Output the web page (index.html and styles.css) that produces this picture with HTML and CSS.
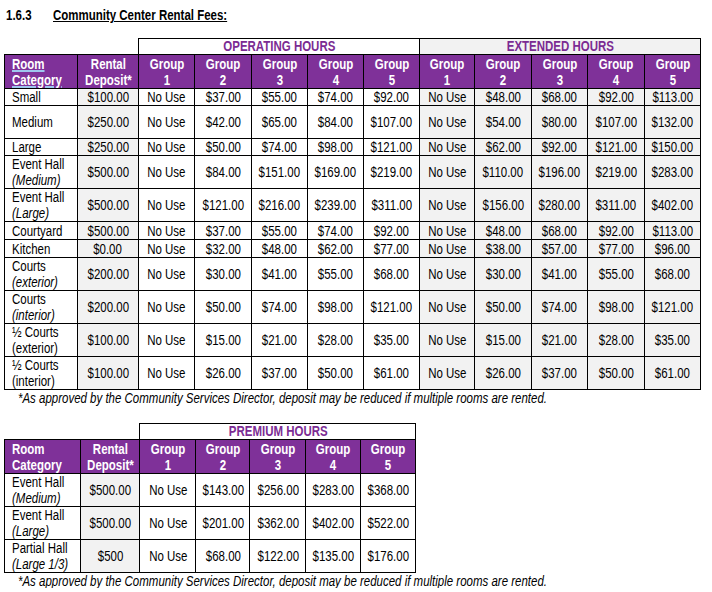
FILE: index.html
```html
<!DOCTYPE html>
<html>
<head>
<meta charset="utf-8">
<link rel="stylesheet" href="styles.css">
</head>
<body>
<div class="page">
  <h1 class="heading"><span class="num"><span class="n">1.6.3</span></span><span class="title"><span class="n">Community Center Rental Fees:</span></span></h1>

  <table class="fees t1">
    <colgroup>
      <col style="width:73px"><col style="width:61px">
      <col style="width:56px"><col style="width:57px"><col style="width:56px"><col style="width:56px"><col style="width:56px">
      <col style="width:55px"><col style="width:57px"><col style="width:56px"><col style="width:57px"><col style="width:56px">
    </colgroup>
    <tr class="cap">
      <td class="blank" colspan="2"></td>
      <td class="captitle" colspan="5"><span class="n">OPERATING HOURS</span></td>
      <td class="captitle ext" colspan="5"><span class="n">EXTENDED HOURS</span></td>
    </tr>
    <tr class="head">
      <th class="room"><span class="n"><span class="ul">Room </span><br><span class="ul">Category</span></span></th>
      <th><span class="n">Rental<br>Deposit*</span></th>
      <th><span class="n">Group<br>1</span></th><th><span class="n">Group<br>2</span></th><th><span class="n">Group<br>3</span></th><th><span class="n">Group<br>4</span></th><th><span class="n">Group<br>5</span></th>
      <th><span class="n">Group<br>1</span></th><th><span class="n">Group<br>2</span></th><th><span class="n">Group<br>3</span></th><th><span class="n">Group<br>4</span></th><th><span class="n">Group<br>5</span></th>
    </tr>
    <tr class="r1"><td class="room"><span class="n">Small</span></td><td class="dep"><span class="n">$100.00</span></td><td><span class="n">No Use</span></td><td><span class="n">$37.00</span></td><td><span class="n">$55.00</span></td><td><span class="n">$74.00</span></td><td><span class="n">$92.00</span></td><td class="g"><span class="n">No Use</span></td><td class="g"><span class="n">$48.00</span></td><td class="g"><span class="n">$68.00</span></td><td class="g"><span class="n">$92.00</span></td><td class="g"><span class="n">$113.00</span></td></tr>
    <tr class="r2"><td class="room"><span class="n">Medium</span></td><td class="dep"><span class="n">$250.00</span></td><td><span class="n">No Use</span></td><td><span class="n">$42.00</span></td><td><span class="n">$65.00</span></td><td><span class="n">$84.00</span></td><td><span class="n">$107.00</span></td><td class="g"><span class="n">No Use</span></td><td class="g"><span class="n">$54.00</span></td><td class="g"><span class="n">$80.00</span></td><td class="g"><span class="n">$107.00</span></td><td class="g"><span class="n">$132.00</span></td></tr>
    <tr class="r1"><td class="room"><span class="n">Large</span></td><td class="dep"><span class="n">$250.00</span></td><td><span class="n">No Use</span></td><td><span class="n">$50.00</span></td><td><span class="n">$74.00</span></td><td><span class="n">$98.00</span></td><td><span class="n">$121.00</span></td><td class="g"><span class="n">No Use</span></td><td class="g"><span class="n">$62.00</span></td><td class="g"><span class="n">$92.00</span></td><td class="g"><span class="n">$121.00</span></td><td class="g"><span class="n">$150.00</span></td></tr>
    <tr class="r2"><td class="room"><span class="n">Event Hall<br><i>(Medium)</i></span></td><td class="dep"><span class="n">$500.00</span></td><td><span class="n">No Use</span></td><td><span class="n">$84.00</span></td><td><span class="n">$151.00</span></td><td><span class="n">$169.00</span></td><td><span class="n">$219.00</span></td><td class="g"><span class="n">No Use</span></td><td class="g"><span class="n">$110.00</span></td><td class="g"><span class="n">$196.00</span></td><td class="g"><span class="n">$219.00</span></td><td class="g"><span class="n">$283.00</span></td></tr>
    <tr class="r2"><td class="room"><span class="n">Event Hall<br><i>(Large)</i></span></td><td class="dep"><span class="n">$500.00</span></td><td><span class="n">No Use</span></td><td><span class="n">$121.00</span></td><td><span class="n">$216.00</span></td><td><span class="n">$239.00</span></td><td><span class="n">$311.00</span></td><td class="g"><span class="n">No Use</span></td><td class="g"><span class="n">$156.00</span></td><td class="g"><span class="n">$280.00</span></td><td class="g"><span class="n">$311.00</span></td><td class="g"><span class="n">$402.00</span></td></tr>
    <tr class="r1b"><td class="room"><span class="n">Courtyard</span></td><td class="dep"><span class="n">$500.00</span></td><td><span class="n">No Use</span></td><td><span class="n">$37.00</span></td><td><span class="n">$55.00</span></td><td><span class="n">$74.00</span></td><td><span class="n">$92.00</span></td><td class="g"><span class="n">No Use</span></td><td class="g"><span class="n">$48.00</span></td><td class="g"><span class="n">$68.00</span></td><td class="g"><span class="n">$92.00</span></td><td class="g"><span class="n">$113.00</span></td></tr>
    <tr class="r1b"><td class="room"><span class="n">Kitchen</span></td><td class="dep"><span class="n">$0.00</span></td><td><span class="n">No Use</span></td><td><span class="n">$32.00</span></td><td><span class="n">$48.00</span></td><td><span class="n">$62.00</span></td><td><span class="n">$77.00</span></td><td class="g"><span class="n">No Use</span></td><td class="g"><span class="n">$38.00</span></td><td class="g"><span class="n">$57.00</span></td><td class="g"><span class="n">$77.00</span></td><td class="g"><span class="n">$96.00</span></td></tr>
    <tr class="r2"><td class="room"><span class="n">Courts<br><i>(exterior)</i></span></td><td class="dep"><span class="n">$200.00</span></td><td><span class="n">No Use</span></td><td><span class="n">$30.00</span></td><td><span class="n">$41.00</span></td><td><span class="n">$55.00</span></td><td><span class="n">$68.00</span></td><td class="g"><span class="n">No Use</span></td><td class="g"><span class="n">$30.00</span></td><td class="g"><span class="n">$41.00</span></td><td class="g"><span class="n">$55.00</span></td><td class="g"><span class="n">$68.00</span></td></tr>
    <tr class="r2"><td class="room"><span class="n">Courts<br><i>(interior)</i></span></td><td class="dep"><span class="n">$200.00</span></td><td><span class="n">No Use</span></td><td><span class="n">$50.00</span></td><td><span class="n">$74.00</span></td><td><span class="n">$98.00</span></td><td><span class="n">$121.00</span></td><td class="g"><span class="n">No Use</span></td><td class="g"><span class="n">$50.00</span></td><td class="g"><span class="n">$74.00</span></td><td class="g"><span class="n">$98.00</span></td><td class="g"><span class="n">$121.00</span></td></tr>
    <tr class="r2"><td class="room"><span class="n">½ Courts<br>(exterior)</span></td><td class="dep"><span class="n">$100.00</span></td><td><span class="n">No Use</span></td><td><span class="n">$15.00</span></td><td><span class="n">$21.00</span></td><td><span class="n">$28.00</span></td><td><span class="n">$35.00</span></td><td class="g"><span class="n">No Use</span></td><td class="g"><span class="n">$15.00</span></td><td class="g"><span class="n">$21.00</span></td><td class="g"><span class="n">$28.00</span></td><td class="g"><span class="n">$35.00</span></td></tr>
    <tr class="r2"><td class="room"><span class="n">½ Courts<br>(interior)</span></td><td class="dep"><span class="n">$100.00</span></td><td><span class="n">No Use</span></td><td><span class="n">$26.00</span></td><td><span class="n">$37.00</span></td><td><span class="n">$50.00</span></td><td><span class="n">$61.00</span></td><td class="g"><span class="n">No Use</span></td><td class="g"><span class="n">$26.00</span></td><td class="g"><span class="n">$37.00</span></td><td class="g"><span class="n">$50.00</span></td><td class="g"><span class="n">$61.00</span></td></tr>
  </table>
  <p class="note"><span class="n">*As approved by the Community Services Director, deposit may be reduced if multiple rooms are rented.</span></p>

  <table class="fees t2">
    <colgroup>
      <col style="width:74px"><col style="width:59px">
      <col style="width:56px"><col style="width:54px"><col style="width:56px"><col style="width:55px"><col style="width:55px">
    </colgroup>
    <tr class="cap">
      <td class="blank" colspan="2"></td>
      <td class="captitle" colspan="5"><span class="n">PREMIUM HOURS</span></td>
    </tr>
    <tr class="head">
      <th class="room"><span class="n">Room<br>Category</span></th>
      <th><span class="n">Rental<br>Deposit*</span></th>
      <th><span class="n">Group<br>1</span></th><th><span class="n">Group<br>2</span></th><th><span class="n">Group<br>3</span></th><th><span class="n">Group<br>4</span></th><th><span class="n">Group<br>5</span></th>
    </tr>
    <tr class="r2"><td class="room"><span class="n">Event Hall<br><i>(Medium)</i></span></td><td class="dep"><span class="n">$500.00</span></td><td><span class="n">No Use</span></td><td><span class="n">$143.00</span></td><td><span class="n">$256.00</span></td><td><span class="n">$283.00</span></td><td><span class="n">$368.00</span></td></tr>
    <tr class="r2"><td class="room"><span class="n">Event Hall<br><i>(Large)</i></span></td><td class="dep"><span class="n">$500.00</span></td><td><span class="n">No Use</span></td><td><span class="n">$201.00</span></td><td><span class="n">$362.00</span></td><td><span class="n">$402.00</span></td><td><span class="n">$522.00</span></td></tr>
    <tr class="r2"><td class="room"><span class="n">Partial Hall<br><i>(Large 1/3)</i></span></td><td class="dep"><span class="n">$500</span></td><td><span class="n">No Use</span></td><td><span class="n">$68.00</span></td><td><span class="n">$122.00</span></td><td><span class="n">$135.00</span></td><td><span class="n">$176.00</span></td></tr>
  </table>
  <p class="note last"><span class="n">*As approved by the Community Services Director, deposit may be reduced if multiple rooms are rented.</span></p>
</div>
</body>
</html>
```
FILE: styles.css
```css
html, body {
  margin: 0;
  padding: 0;
  background: #ffffff;
}
body {
  font-family: "Liberation Sans", Arial, sans-serif;
  color: #000;
}
.n {
  display: inline-block;
  transform: scaleX(0.82);
  transform-origin: center center;
  white-space: nowrap;
}
.page {
  padding: 6px 0 0 4px;
}
.heading {
  margin: 0 0 14px 2px;
  font-size: 14px;
  line-height: 18px;
  font-weight: bold;
  display: flex;
}
.heading .n {
  transform-origin: left center;
}
.heading .num {
  width: 47px;
}
.heading .title .n {
  text-decoration: underline;
}
.fees {
  border-collapse: collapse;
  table-layout: fixed;
  font-size: 14px;
  line-height: 16px;
}
.fees td, .fees th {
  border: 1px solid #000;
  padding: 0;
  text-align: center;
  vertical-align: middle;
  overflow: visible;
  white-space: nowrap;
}
.fees .cap td {
  height: 15px;
}
.fees td.blank {
  border: none;
}
.fees td.captitle {
  color: #7b2b93;
  font-weight: bold;
  line-height: 15px;
}
.fees td.ext {
  background: #f2f2f2;
}
.fees .head th {
  background: #7f3199;
  color: #fff;
  font-weight: bold;
  height: 33px;
  line-height: 16px;
}
.fees .room {
  text-align: left;
  padding-left: 7px;
}
.fees .room .n {
  transform-origin: left center;
}
.ul {
  text-decoration: underline;
  text-decoration-color: #9ec5ee;
  text-decoration-thickness: 2px;
  text-underline-offset: 1px;
}
.fees td.dep, .fees td.g {
  background: #f2f2f2;
}
.fees .r1 td {
  height: 16px;
}
.fees .r1b td {
  height: 17px;
}
.fees .r2 td {
  height: 32px;
}
.note {
  margin: 1px 0 18px 14px;
  font-style: italic;
  font-size: 14px;
  line-height: 14px;
}
.note.last {
  margin-bottom: 0;
}
.note .n {
  transform-origin: left center;
}
```
